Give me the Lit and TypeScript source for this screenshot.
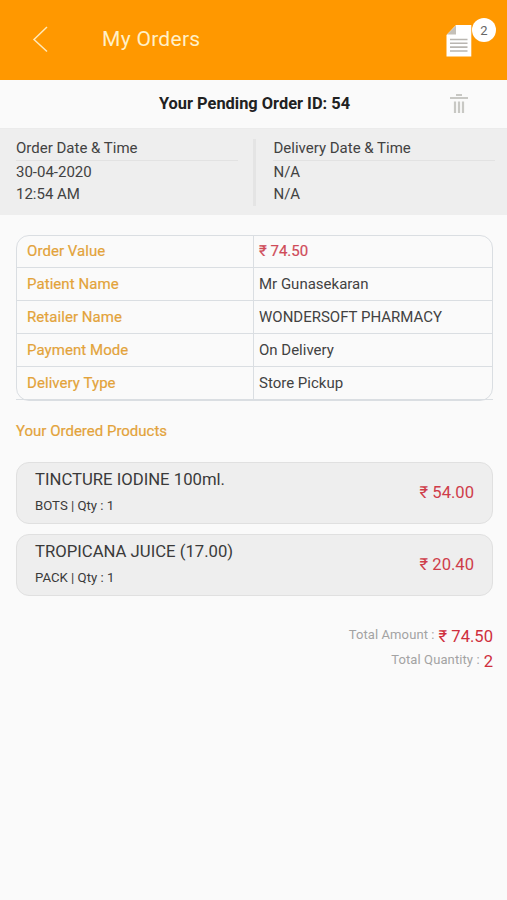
import { LitElement, html, css } from "lit";
import { customElement } from "lit/decorators.js";

const details = [
  { label: "Order Value", value: "₹ 74.50", price: true },
  { label: "Patient Name", value: "Mr Gunasekaran" },
  { label: "Retailer Name", value: "WONDERSOFT PHARMACY" },
  { label: "Payment Mode", value: "On Delivery" },
  { label: "Delivery Type", value: "Store Pickup" },
];

const products = [
  { name: "TINCTURE IODINE 100ml.", info: "BOTS | Qty : 1", price: "₹ 54.00" },
  { name: "TROPICANA JUICE (17.00)", info: "PACK | Qty : 1", price: "₹ 20.40" },
];

@customElement("app-root")
export class AppRoot extends LitElement {
  static styles = css`
    :host {
      display: block;
      height: 900px;
      overflow: hidden;
      background: #fafafa;
      color: #424242;
      font-family: Roboto, "Noto Sans", sans-serif;
      font-size: 15px;
    }
    * { box-sizing: border-box; }
    svg { display: block; }
    .bar {
      height: 80px;
      background: #ff9800;
      display: flex;
      align-items: center;
      padding: 0 11px 2px 32px;
    }
    .title {
      margin-left: 54px;
      flex: 1;
      font-size: 21px;
      line-height: 24px;
      letter-spacing: 0.3px;
      color: #fff0c8;
    }
    .docs { position: relative; width: 50px; height: 42px; }
    .docs svg { position: absolute; left: 0; top: 7px; }
    .badge {
      position: absolute;
      right: 0;
      top: 0;
      width: 24px;
      height: 24px;
      border-radius: 50%;
      background: #fff;
      color: #666;
      font-size: 13px;
      line-height: 25px;
      text-align: center;
    }
    .heading {
      height: 48px;
      display: grid;
      grid-template-columns: 1fr auto 1fr;
      align-items: center;
      padding: 0 0 1px 2px;
      color: #212121;
      font-size: 16.4px;
      font-weight: 700;
    }
    .heading span { grid-column: 2; }
    .heading svg { margin-left: 100px; }
    .dates {
      height: 87px;
      background: #eeeeee;
      display: flex;
      padding: 10px 12px 9px 16px;
      border-top: 1px solid #ebebeb;
    }
    .date { width: 222px; line-height: 22px; }
    .date .label { height: 22px; line-height: 19px; border-bottom: 1px solid #e2e2e2; }
    .split { width: 4px; margin: 0 17px 0 15px; background: #e4e4e4; }
    .table {
      margin: 20px 14px 0 16px;
      height: 166px;
      border: 1px solid #dadee2;
      border-radius: 13px;
    }
    .row { display: flex; height: 33px; line-height: 33px; border-bottom: 1px solid #dadee2; }
    .row:first-child { height: 32px; line-height: 30px; }
    .row:last-child { margin: 0 -1px; padding: 0 1px; }
    .key { width: 237px; padding-left: 10px; border-right: 1px solid #dadee2; color: #e3a33b; letter-spacing: 0.06px; -webkit-text-stroke: 0.2px #e3a33b; }
    .val { padding-left: 5px; }
    .price { color: #cf4b59; -webkit-text-stroke: 0.2px #cf4b59; }
    .section { margin: 20px 16px 0; height: 20px; line-height: 20px; color: #e3a33b; -webkit-text-stroke: 0.2px #e3a33b; }
    .list { margin: 21px 14px 0 16px; display: flex; flex-direction: column; gap: 10px; }
    .product {
      height: 62px;
      border: 1px solid #e0e0e0;
      border-radius: 13px;
      background: #eeeeee;
      padding: 0 18px;
      display: flex;
      align-items: center;
      justify-content: space-between;
      color: #3a3a3a;
    }
    .name { font-size: 16.7px; line-height: 26px; }
    .info { font-size: 13.2px; line-height: 26px; }
    .cost { font-size: 16.6px; color: #cf3d4a; padding-bottom: 2px; }
    .totals { margin: 29px 14px 0 0; display: flex; flex-direction: column; align-items: flex-end; }
    .total { display: flex; height: 25px; line-height: 19px; font-size: 13px; color: #a3a3a3; letter-spacing: 0.1px; }
    .sum { margin: 2px 0 0 4px; line-height: 20px; font-size: 16.6px; color: #cf2f3d; letter-spacing: 0; }
  `;

  render() {
    return html`
      <header class="bar">
        <svg width="16" height="28" viewBox="0 0 16 28" fill="none" stroke="#ffe9b8" stroke-width="1.5">
          <path d="M15 2L2 14.5L15 26.5" />
        </svg>
        <div class="title">My Orders</div>
        <div class="docs">
          <svg width="26" height="32" viewBox="0 0 26 32">
            <path d="M10 0H25.3V31.5H0.5V10Z" fill="#fff" />
            <path d="M10 0.5V9.5H1Z" fill="#c4c0b8" />
            <path d="M4 14.5H21.5M4 18.3H21.5M4 22.1H21.5M4 26H21.5" stroke="#b9b6b1" stroke-width="1.6" />
          </svg>
          <div class="badge">2</div>
        </div>
      </header>
      <div class="heading">
        <span>Your Pending Order ID: 54</span>
        <svg width="18" height="20" viewBox="0 0 18 20" fill="none" stroke="#c8c8c4">
          <path d="M6 1H12M0 4H18" stroke-width="2" />
          <path d="M5 7.5V19M9 7.5V19M13 7.5V19" stroke-width="2.2" />
        </svg>
      </div>
      <section class="dates">
        <div class="date">
          <div class="label">Order Date &amp; Time</div>
          <div>30-04-2020</div>
          <div>12:54 AM</div>
        </div>
        <div class="split"></div>
        <div class="date">
          <div class="label">Delivery Date &amp; Time</div>
          <div>N/A</div>
          <div>N/A</div>
        </div>
      </section>
      <section class="table">
        ${details.map((d) => html`
          <div class="row">
            <div class="key">${d.label}</div>
            <div class="val ${d.price ? "price" : ""}">${d.value}</div>
          </div>`)}
      </section>
      <div class="section">Your Ordered Products</div>
      <section class="list">
        ${products.map((p) => html`
          <div class="product">
            <div>
              <div class="name">${p.name}</div>
              <div class="info">${p.info}</div>
            </div>
            <div class="cost">${p.price}</div>
          </div>`)}
      </section>
      <section class="totals">
        <div class="total">Total Amount : <span class="sum">₹ 74.50</span></div>
        <div class="total">Total Quantity : <span class="sum">2</span></div>
      </section>
    `;
  }
}
